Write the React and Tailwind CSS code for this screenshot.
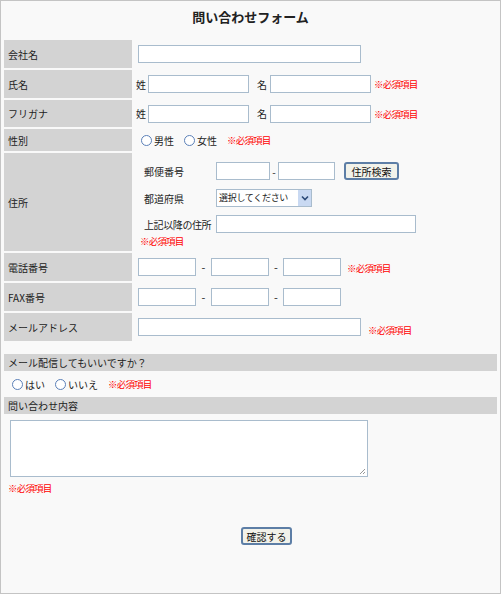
import React from 'react';

const font = { fontFamily: '"Noto Sans CJK JP", "Noto Sans", sans-serif' };

function Input({ w }) {
  return <span className={`inline-block h-[18px] bg-white border border-[#a9bccd] ${w}`} />;
}

function Req() {
  return <span className="text-[#ff0000] text-[9.5px] tracking-[-0.8px] whitespace-nowrap">※必須項目</span>;
}

function Radio({ label }) {
  return (
    <span className="inline-flex items-center gap-[2px] text-[10px] text-[#222]">
      <span className="inline-block w-[11px] h-[11px] rounded-full border-[1.5px] border-[#5b80b8] bg-white" />
      {label}
    </span>
  );
}

function Btn({ children, w }) {
  return (
    <span className={`inline-flex items-center justify-center h-[18px] ${w} border-2 border-[#5d7ea6] rounded-[3px] bg-[#f2f2ea] text-[10px] text-[#111] whitespace-nowrap`}>
      {children}
    </span>
  );
}

function Row({ label, h, children, alignTop }) {
  return (
    <>
      <div className={`bg-[#d3d3d3] ${h} flex items-center pl-[4px] text-[10px] text-[#222]`}>{label}</div>
      <div className={`${h} flex ${alignTop ? 'items-start' : 'items-center'} pl-[4px]`}>{children}</div>
    </>
  );
}

function NameFields() {
  return (
    <div className="flex items-center text-[10px] text-[#222] -ml-[2px]">
      <span className="w-[12px]">姓</span>
      <Input w="w-[101px]" />
      <span className="ml-[8px] w-[13px]">名</span>
      <Input w="w-[101px]" />
      <span className="ml-[3px]"><Req /></span>
    </div>
  );
}

export default function App() {
  return (
    <div className="w-[501px] h-[594px] border border-[#c4c4c4] bg-[#f9f9f9] overflow-hidden" style={font}>
      <div className="h-[39px] flex justify-center pt-[6px]">
        <h1 className="text-[13px] font-bold text-[#222]">問い合わせフォーム</h1>
      </div>
      <div className="grid grid-cols-[128px_1fr] gap-x-[2px] gap-y-[2px] px-[3px] w-[497px]">
        <Row label="会社名" h="h-[28px]">
          <Input w="w-[223px]" />
        </Row>
        <Row label="氏名" h="h-[28px]">
          <NameFields />
        </Row>
        <Row label="フリガナ" h="h-[27px]">
          <NameFields />
        </Row>
        <Row label="性別" h="h-[22px]">
          <div className="flex items-center gap-[10px] pl-[3px]">
            <Radio label="男性" />
            <Radio label="女性" />
            <Req />
          </div>
        </Row>
        <Row label="住所" h="h-[98px]" alignTop>
          <div className="flex flex-col text-[10px] text-[#222] pl-[2px] pt-[9px]">
            <div className="flex items-center h-[18px]">
              <span className="w-[76px] whitespace-nowrap pl-[4px]">郵便番号</span>
              <Input w="w-[54px]" />
              <span className="w-[8px] text-center">-</span>
              <Input w="w-[57px]" />
              <span className="ml-[9px]"><Btn w="w-[55px]">住所検索</Btn></span>
            </div>
            <div className="flex items-center h-[18px] mt-[9px]">
              <span className="w-[76px] whitespace-nowrap pl-[4px]">都道府県</span>
              <span className="inline-flex items-center h-[18px] w-[96px] bg-white border border-[#a9bccd] pl-[2px] text-[9px] whitespace-nowrap overflow-hidden">
                <span className="flex-1 tracking-[-0.3px]">選択してください</span>
                <span className="w-[13px] h-[16px] shrink-0 bg-[#c9d9f2] flex items-center justify-center">
                  <svg width="8" height="6" viewBox="0 0 8 6"><path d="M1 1.5 L4 4.5 L7 1.5" stroke="#2c4a78" strokeWidth="1.6" fill="none" /></svg>
                </span>
              </span>
            </div>
            <div className="flex items-center h-[18px] mt-[8px]">
              <span className="w-[76px] whitespace-nowrap pl-[4px] tracking-[-0.4px]">上記以降の住所</span>
              <Input w="w-[200px]" />
            </div>
            <div className="mt-[2px] leading-[12px]"><Req /></div>
          </div>
        </Row>
        <Row label="電話番号" h="h-[28px]">
          <div className="flex items-center text-[11px] text-[#222]">
            <Input w="w-[58px]" />
            <span className="w-[15px] text-center">-</span>
            <Input w="w-[58px]" />
            <span className="w-[14px] text-center">-</span>
            <Input w="w-[58px]" />
            <span className="ml-[6px]"><Req /></span>
          </div>
        </Row>
        <Row label="FAX番号" h="h-[28px]">
          <div className="flex items-center text-[11px] text-[#222]">
            <Input w="w-[58px]" />
            <span className="w-[15px] text-center">-</span>
            <Input w="w-[58px]" />
            <span className="w-[14px] text-center">-</span>
            <Input w="w-[58px]" />
          </div>
        </Row>
        <Row label="メールアドレス" h="h-[28px]">
          <div className="flex items-center">
            <Input w="w-[223px]" />
            <span className="ml-[7px]"><Req /></span>
          </div>
        </Row>
      </div>
      <div className="px-[3px] mt-[13px]">
        <div className="bg-[#d3d3d3] h-[17px] flex items-center pl-[4px] text-[10px] text-[#222]">メール配信してもいいですか？</div>
        <div className="flex items-center gap-[10px] h-[26px] pl-[8px]">
          <Radio label="はい" />
          <Radio label="いいえ" />
          <Req />
        </div>
        <div className="bg-[#d3d3d3] h-[17px] flex items-center pl-[4px] text-[10px] text-[#222]">問い合わせ内容</div>
        <div className="pl-[6px] pt-[6px]">
          <div className="relative w-[358px] h-[57px] bg-white border border-[#a9bccd]">
            <svg className="absolute right-[1px] bottom-[1px]" width="7" height="7" viewBox="0 0 7 7"><path d="M6 1 L1 6 M6 4 L4 6" stroke="#999" strokeWidth="1" /></svg>
          </div>
        </div>
        <div className="pl-[4px] mt-[1px] leading-[14px]"><Req /></div>
        <div className="flex justify-start mt-[32px] pl-[237px]">
          <Btn w="w-[51px]">確認する</Btn>
        </div>
      </div>
    </div>
  );
}
